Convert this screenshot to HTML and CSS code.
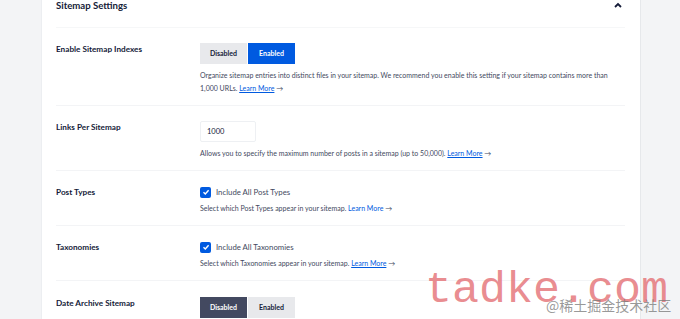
FILE: index.html
```html
<!DOCTYPE html>
<html lang="en">
<head>
    <meta charset="UTF-8">
    <meta name="viewport" content="width=device-width, initial-scale=1.0">
    <title>Sitemap Settings</title>
    <link rel="stylesheet" href="styles.css">
</head>
<body>

<div class="page">
    <div class="card">
        <!-- card header -->
        <div class="card-header">
            <span class="card-title">Sitemap Settings</span>
            <span class="chevron">
                <svg width="8" height="6" viewBox="0 0 8 6"><path d="M1 5 L4 2 L7 5" fill="none" stroke="#141b38" stroke-width="1.8"/></svg>
            </span>
        </div>

        <!-- settings rows -->
        <div class="row">
            <div class="label">Enable Sitemap Indexes</div>
            <div class="control">
                <div class="toggle">
                    <span class="opt">Disabled</span>
                    <span class="opt opt-on">Enabled</span>
                </div>
                <p class="desc">Organize sitemap entries into distinct files in your sitemap. We recommend you enable this setting if your sitemap contains more than 1,000 URLs. <a href="#">Learn More</a> <span class="arrow">→</span></p>
            </div>
        </div>

        <div class="row">
            <div class="label">Links Per Sitemap</div>
            <div class="control">
                <input class="num" type="text" value="1000">
                <p class="desc">Allows you to specify the maximum number of posts in a sitemap (up to 50,000). <a href="#">Learn More</a> <span class="arrow">→</span></p>
            </div>
        </div>

        <div class="row">
            <div class="label">Post Types</div>
            <div class="control">
                <label class="check"><span class="box"><svg width="8" height="8" viewBox="0 0 8 8"><path d="M1.5 4.2 L3.3 5.9 L6.6 2.2" fill="none" stroke="#fff" stroke-width="1.4"/></svg></span>Include All Post Types</label>
                <p class="desc desc-tight">Select which Post Types appear in your sitemap. <a href="#" class="plain">Learn More</a> <span class="arrow">→</span></p>
            </div>
        </div>

        <div class="row">
            <div class="label">Taxonomies</div>
            <div class="control">
                <label class="check"><span class="box"><svg width="8" height="8" viewBox="0 0 8 8"><path d="M1.5 4.2 L3.3 5.9 L6.6 2.2" fill="none" stroke="#fff" stroke-width="1.4"/></svg></span>Include All Taxonomies</label>
                <p class="desc desc-tight">Select which Taxonomies appear in your sitemap. <a href="#">Learn More</a> <span class="arrow">→</span></p>
            </div>
        </div>

        <div class="row row-last">
            <div class="label">Date Archive Sitemap</div>
            <div class="control">
                <div class="toggle">
                    <span class="opt opt-dark">Disabled</span>
                    <span class="opt">Enabled</span>
                </div>
            </div>
        </div>
    </div>
    <div class="side"></div>
</div>

<!-- watermark over the page -->
<div class="mark">tadke.com</div>
<div class="mark-sub">@稀土掘金技术社区</div>

</body>
</html>
```

FILE: styles.css
```css
body {
    margin: 0;
    background-color: #f3f4f6;
    font-family: Lato, "Liberation Sans", sans-serif;
    color: #141b38;
    overflow: hidden;
}
.page {
    display: flex;
    padding-left: 41px;
    height: 319px;
    overflow: hidden;
}
.card {
    width: 600px;
    background-color: #fff;
    border-left: 1px solid #eceef1;
    border-right: 1px solid #e6e8eb;
    padding: 0 15px 0 14px;
    box-sizing: border-box;
}
.card-header {
    display: flex;
    justify-content: space-between;
    align-items: flex-start;
    height: 27px;
    border-bottom: 1px solid #f6f7f8;
}
.card-title {
    font-size: 9.6px;
    font-weight: 700;
    line-height: 12px;
}
.chevron {
    display: flex;
    margin-top: 2px;
    margin-right: 3px;
}
.row {
    display: flex;
    padding: 15px 0 10px;
    border-bottom: 1px solid #f3f4f6;
}
.row-last {
    border-bottom: none;
    padding-top: 16px;
}
.label {
    width: 144px;
    font-size: 8.2px;
    font-weight: 700;
    line-height: 12px;
}
.control {
    flex: 1;
}
.toggle {
    display: flex;
}
.opt {
    display: inline-block;
    width: 47px;
    height: 21px;
    line-height: 21px;
    text-align: center;
    font-size: 7px;
    font-weight: 700;
    background-color: #e8e9ec;
    color: #141b38;
}
.opt + .opt {
    margin-left: 1px;
}
.opt-on {
    background-color: #005ae0;
    color: #fff;
}
.opt-dark {
    background-color: #434960;
    color: #fff;
}
.desc {
    margin: 5px 0 0;
    font-size: 7px;
    line-height: 13px;
    color: #434960;
}
.desc-tight {
    margin-top: 4px;
}
.desc a {
    color: #005ae0;
}
.desc a.plain {
    text-decoration: none;
}
.arrow {
    line-height: 0;
    color: #434960;
}
.num {
    width: 56px;
    height: 21px;
    box-sizing: border-box;
    border: 1px solid #eef0f3;
    border-radius: 2px;
    padding: 0 6px;
    font-family: Lato, sans-serif;
    font-size: 7.5px;
    color: #141b38;
    display: block;
}
.check {
    display: flex;
    align-items: center;
    height: 12px;
    font-size: 7.8px;
    color: #434960;
}
.box {
    width: 11px;
    height: 11px;
    border-radius: 2px;
    background-color: #005ae0;
    display: inline-flex;
    align-items: center;
    justify-content: center;
    margin-right: 5px;
}
.side {
    flex: 1;
}
.mark {
    position: absolute;
    left: 425px;
    top: 266px;
    font-family: "Liberation Mono", monospace;
    font-size: 45px;
    color: rgba(228, 110, 115, 0.8);
    line-height: 50px;
}
.mark-sub {
    position: absolute;
    left: 546px;
    top: 297px;
    font-family: "Noto Sans CJK SC", sans-serif;
    font-size: 14px;
    line-height: 16px;
    color: rgba(120, 120, 120, 0.75);
}
```
